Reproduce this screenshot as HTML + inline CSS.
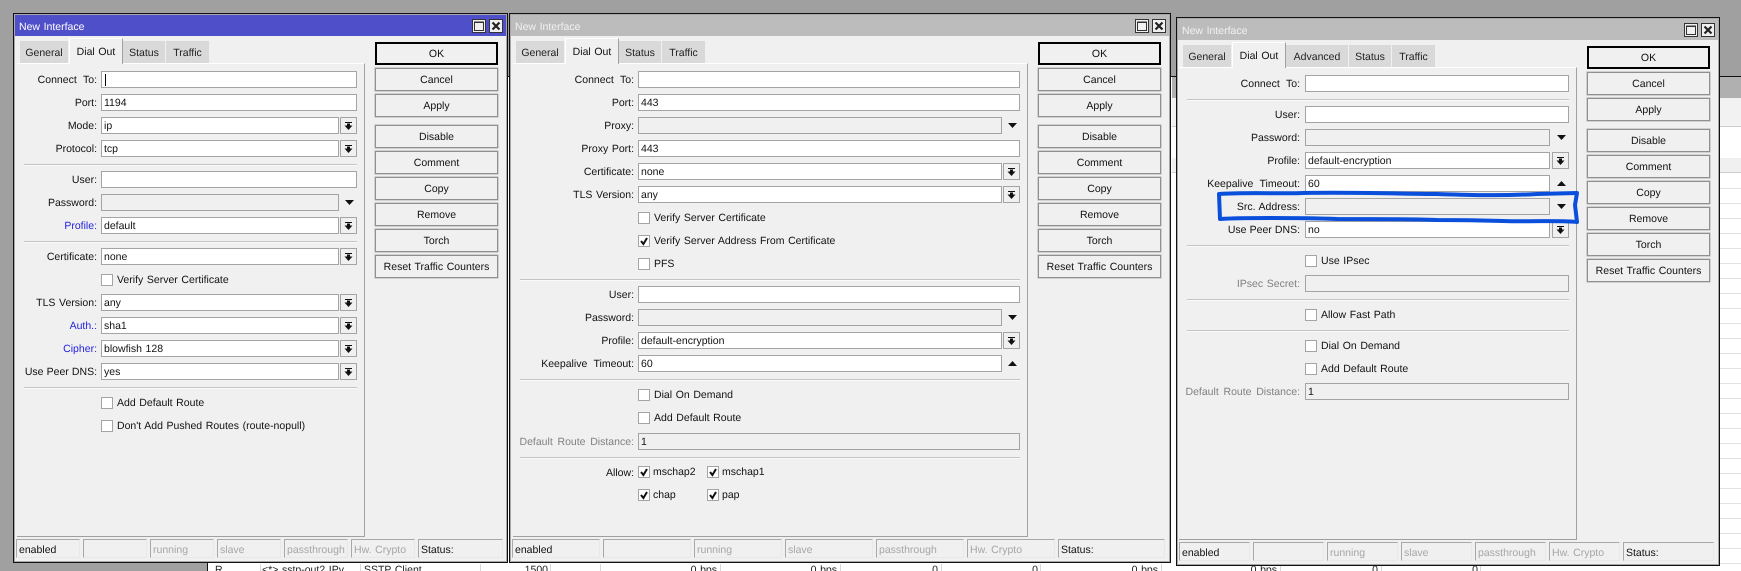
<!DOCTYPE html>
<html lang="en"><head><meta charset="utf-8"><title>New Interface</title>
<style>
html,body{margin:0;padding:0;width:1741px;height:571px;overflow:hidden;background:#a0a0a0}
#r{position:absolute;left:0;top:0;width:1741px;height:571px;overflow:hidden;background:#a0a0a0;font:10.5px/17px "Liberation Sans",sans-serif;word-spacing:.7px;text-rendering:geometricPrecision;color:#111}
#r *{position:absolute;box-sizing:border-box;white-space:nowrap}
.w{background:#f0f0f0;border:1px solid #111;box-shadow:inset 0 0 0 1px #a8a8a8}
.t{height:21px;background:#bcbcbc}
.a{background:#4f50c9}
.tt{height:21px;line-height:23px;color:#f2f2f2}
.att{color:#fff}
.wb{width:14px;height:14px;border:1px solid #333;background:#f0f0f0}
.wb svg{left:0;top:0;width:12px;height:12px}
.tb{height:22px;background:#d9d9d9;border-right:1px solid #f0f0f0;text-align:center;line-height:24px;color:#222}
.ta{height:26px;background:#f0f0f0;border-top:1px solid #fff;border-left:1px solid #fff;border-right:1px solid #a0a0a0;text-align:center;line-height:26px;z-index:2;color:#111}
.p{background:#f0f0f0;border-top:1px solid #fff;border-right:1px solid #a0a0a0;border-bottom:1px solid #a0a0a0}
.l{height:17px;line-height:19px;text-align:right}
.w3{word-spacing:3.5px}
.w2{word-spacing:1.8px}
.w0{word-spacing:.2px}
.g{color:#808080}
.bl{color:#1f1fe0}
.l1{left:0;width:97px}.l2{left:434px;width:200px}.l3{left:1100px;width:200px}
.f{height:17px;background:#fff;border:1px solid #a4a4a4;line-height:17px;padding-left:2px}
.n{background:#f0f0f0}
.f1{left:101px;width:256px}.s1{left:101px;width:238px}
.f2{left:638px;width:382px}.s2{left:638px;width:364px}
.f3{left:1305px;width:264px}.s3{left:1305px;width:245px}
.d{width:17px;height:17px}
.d1{left:340px}.d2{left:1003px}.d3{left:1552px}
.rr{width:9px;height:5px}
.r1{left:345px}.r2{left:1008px}.r3{left:1557px}
.c{width:12px;height:12px}
.c1{left:101px}.c2{left:638px}.c3{left:1305px}
.x{height:16px;line-height:17px}
.x1{left:117px}.x2{left:654px}.x3{left:1321px}
.h{height:1px;background:#c4c4c4;box-shadow:0 1px 0 #fafafa}
.b{width:123px;height:23px;border:1px solid #909090;background:#f0f0f0;box-shadow:0 0 0 .5px #b0b0b0;text-align:center;line-height:23px;color:#111}
.k{border:2px solid #000;line-height:21px;box-shadow:none}
.b1{left:375px}.b2{left:1038px}.b3{left:1587px}
.st{height:19px;border-top:1px solid #a8a8a8;border-left:1px solid #a8a8a8;border-right:1px solid #e8e8e8;border-bottom:1px solid #e8e8e8;line-height:20px;padding-left:2px;color:#a6a6a6;background:#f0f0f0}
.on{color:#111}
.cell{height:15px;line-height:15px;color:#222}
.lv{top:564px;width:1px;height:7px;background:#d8d8d8}
.ln{left:1720px;width:21px;height:1px;background:#e2e2e2}
</style></head><body><div id="r">
<svg width="0" height="0" style="left:0;top:0">
<defs>
<symbol id="sp" viewBox="0 0 17 17"><rect x=".5" y=".5" width="16" height="16" fill="#f0f0f0" stroke="#a4a4a4"/><path d="M5 5h7v1H5zM7 6.5h3V8.5H7zM4.5 8.5h8L8.5 13z" fill="#111"/></symbol>
<symbol id="dn" viewBox="0 0 9 5"><path d="M0 0h9L4.5 5z" fill="#111"/></symbol>
<symbol id="up" viewBox="0 0 9 5"><path d="M0 5h9L4.5 0z" fill="#111"/></symbol>
<symbol id="no" viewBox="0 0 12 12"><rect x=".5" y=".5" width="11" height="11" fill="#fff" stroke="#a4a4a4"/></symbol>
<symbol id="ck" viewBox="0 0 12 12"><rect x=".5" y=".5" width="11" height="11" fill="#fff" stroke="#a4a4a4"/><path d="M3 6l2.4 3L9 3" fill="none" stroke="#111" stroke-width="2"/></symbol>
<symbol id="mx" viewBox="0 0 12 12"><path d="M1.5 2h9v8.5h-9z" fill="#f0f0f0" stroke="#333"/><path d="M1.5 1.5h9V3h-9z" fill="#333"/></symbol>
<symbol id="cl" viewBox="0 0 12 12"><path d="M2.5 2.5l7 7M9.5 2.5l-7 7" stroke="#222" stroke-width="2.2"/></symbol>
</defs></svg>

<!-- background list -->
<div style="left:208px;top:76px;width:1533px;height:495px;background:#fff;border-top:1px solid #111"></div>
<div style="left:207px;top:76px;width:1px;height:495px;background:#111"></div>
<div style="left:1172px;top:77px;width:569px;height:21px;background:#b0b0b0"></div>
<div style="left:1172px;top:98px;width:569px;height:28px;background:#f2f2f2"></div>
<div style="left:1172px;top:126px;width:569px;height:1px;background:#ccc"></div>
<div style="left:1172px;top:158px;width:569px;height:15px;background:#f0f0f0;border-bottom:1px solid #ccc"></div>
<div class="ln" style="top:188px"></div><div class="ln" style="top:203px"></div><div class="ln" style="top:218px"></div><div class="ln" style="top:233px"></div><div class="ln" style="top:248px"></div><div class="ln" style="top:263px"></div><div class="ln" style="top:278px"></div><div class="ln" style="top:293px"></div><div class="ln" style="top:308px"></div><div class="ln" style="top:323px"></div><div class="ln" style="top:338px"></div><div class="ln" style="top:353px"></div><div class="ln" style="top:368px"></div><div class="ln" style="top:383px"></div><div class="ln" style="top:398px"></div><div class="ln" style="top:413px"></div><div class="ln" style="top:428px"></div><div class="ln" style="top:443px"></div><div class="ln" style="top:458px"></div><div class="ln" style="top:473px"></div><div class="ln" style="top:488px"></div><div class="ln" style="top:503px"></div><div class="ln" style="top:518px"></div><div class="ln" style="top:533px"></div><div class="ln" style="top:548px"></div><div class="ln" style="top:563px"></div>
<div class="lv" style="left:260px"></div><div class="lv" style="left:360px"></div><div class="lv" style="left:480px"></div><div class="lv" style="left:550px"></div><div class="lv" style="left:600px"></div><div class="lv" style="left:720px"></div><div class="lv" style="left:840px"></div><div class="lv" style="left:941px"></div><div class="lv" style="left:1040px"></div><div class="lv" style="left:1161px"></div><div class="lv" style="left:1280px"></div><div class="lv" style="left:1381px"></div><div class="lv" style="left:1480px"></div>
<div class="cell" style="left:215px;top:563px">R</div>
<div class="cell" style="left:262px;top:563px">&lt;*&gt; sstp-out2 IPv</div>
<div class="cell" style="left:364px;top:563px">SSTP Client</div>
<div class="cell" style="left:448px;top:563px;width:100px;text-align:right">1500</div>
<div class="cell" style="left:617px;top:563px;width:100px;text-align:right">0 bps</div>
<div class="cell" style="left:737px;top:563px;width:100px;text-align:right">0 bps</div>
<div class="cell" style="left:838px;top:563px;width:100px;text-align:right">0</div>
<div class="cell" style="left:938px;top:563px;width:100px;text-align:right">0</div>
<div class="cell" style="left:1058px;top:563px;width:100px;text-align:right">0 bps</div>
<div class="cell" style="left:1177px;top:563px;width:100px;text-align:right">0 bps</div>
<div class="cell" style="left:1278px;top:563px;width:100px;text-align:right">0</div>
<div class="cell" style="left:1378px;top:563px;width:100px;text-align:right">0</div>

<!-- WINDOW 1 -->
<div class="w" style="left:13px;top:13px;width:495px;height:550px"></div>
<div class="t a" style="left:15px;top:15px;width:491px"></div>
<div class="tt att" style="left:19px;top:16px">New Interface</div>
<div class="wb" style="left:472px;top:19px"><svg><use href="#mx"/></svg></div>
<div class="wb" style="left:489px;top:19px"><svg><use href="#cl"/></svg></div>
<div class="p" style="left:17px;top:63px;width:348px;height:474px"></div>
<div class="tb" style="left:20px;top:41px;width:49px">General</div>
<div class="ta" style="left:69px;top:38px;width:54px">Dial Out</div>
<div class="tb" style="left:123px;top:41px;width:43px">Status</div>
<div class="tb" style="left:166px;top:41px;width:44px">Traffic</div>

<div class="l l1 w3" style="top:71px">Connect To:</div><div class="f f1" style="top:71px"><div style="left:3px;top:2px;width:1px;height:12px;background:#000"></div></div>
<div class="l l1" style="top:94px">Port:</div><div class="f f1" style="top:94px">1194</div>
<div class="l l1" style="top:117px">Mode:</div><div class="f s1" style="top:117px">ip</div><svg class="d d1" style="top:117px"><use href="#sp"/></svg>
<div class="l l1" style="top:140px">Protocol:</div><div class="f s1" style="top:140px">tcp</div><svg class="d d1" style="top:140px"><use href="#sp"/></svg>
<div class="h" style="left:24px;top:164px;width:333px"></div>
<div class="l l1" style="top:171px">User:</div><div class="f f1" style="top:171px"></div>
<div class="l l1" style="top:194px">Password:</div><div class="f s1 n" style="top:194px"></div><svg class="rr r1" style="top:200px"><use href="#dn"/></svg>
<div class="l l1 bl" style="top:217px">Profile:</div><div class="f s1" style="top:217px">default</div><svg class="d d1" style="top:217px"><use href="#sp"/></svg>
<div class="h" style="left:24px;top:241px;width:333px"></div>
<div class="l l1" style="top:248px">Certificate:</div><div class="f s1" style="top:248px">none</div><svg class="d d1" style="top:248px"><use href="#sp"/></svg>
<svg class="c c1" style="top:274px"><use href="#no"/></svg><div class="x x1" style="top:272px">Verify Server Certificate</div>
<div class="l l1" style="top:294px">TLS Version:</div><div class="f s1" style="top:294px">any</div><svg class="d d1" style="top:294px"><use href="#sp"/></svg>
<div class="l l1 bl" style="top:317px">Auth.:</div><div class="f s1" style="top:317px">sha1</div><svg class="d d1" style="top:317px"><use href="#sp"/></svg>
<div class="l l1 bl" style="top:340px">Cipher:</div><div class="f s1" style="top:340px">blowfish 128</div><svg class="d d1" style="top:340px"><use href="#sp"/></svg>
<div class="l l1 w0" style="top:363px">Use Peer DNS:</div><div class="f s1" style="top:363px">yes</div><svg class="d d1" style="top:363px"><use href="#sp"/></svg>
<div class="h" style="left:24px;top:387px;width:333px"></div>
<svg class="c c1" style="top:397px"><use href="#no"/></svg><div class="x x1" style="top:395px">Add Default Route</div>
<svg class="c c1" style="top:420px"><use href="#no"/></svg><div class="x x1" style="top:418px">Don't Add Pushed Routes (route-nopull)</div>

<div class="b b1 k" style="top:42px">OK</div>
<div class="b b1" style="top:68px">Cancel</div>
<div class="b b1" style="top:94px">Apply</div>
<div class="b b1" style="top:125px">Disable</div>
<div class="b b1" style="top:151px">Comment</div>
<div class="b b1" style="top:177px">Copy</div>
<div class="b b1" style="top:203px">Remove</div>
<div class="b b1" style="top:229px">Torch</div>
<div class="b b1" style="top:255px">Reset Traffic Counters</div>

<div class="st on" style="left:16px;top:539px;width:64px">enabled</div>
<div class="st" style="left:83px;top:539px;width:64px"></div>
<div class="st" style="left:150px;top:539px;width:64px">running</div>
<div class="st" style="left:217px;top:539px;width:64px">slave</div>
<div class="st" style="left:284px;top:539px;width:64px">passthrough</div>
<div class="st" style="left:351px;top:539px;width:64px">Hw. Crypto</div>
<div class="st on" style="left:418px;top:539px;width:85px">Status:</div>

<!-- WINDOW 2 -->
<div class="w" style="left:509px;top:13px;width:662px;height:550px"></div>
<div class="t" style="left:511px;top:15px;width:658px"></div>
<div class="tt" style="left:515px;top:16px">New Interface</div>
<div class="wb" style="left:1135px;top:19px"><svg><use href="#mx"/></svg></div>
<div class="wb" style="left:1152px;top:19px"><svg><use href="#cl"/></svg></div>
<div class="p" style="left:513px;top:63px;width:515px;height:474px"></div>
<div class="tb" style="left:516px;top:41px;width:49px">General</div>
<div class="ta" style="left:565px;top:38px;width:54px">Dial Out</div>
<div class="tb" style="left:619px;top:41px;width:43px">Status</div>
<div class="tb" style="left:662px;top:41px;width:44px">Traffic</div>

<div class="l l2 w3" style="top:71px">Connect To:</div><div class="f f2" style="top:71px"></div>
<div class="l l2" style="top:94px">Port:</div><div class="f f2" style="top:94px">443</div>
<div class="l l2" style="top:117px">Proxy:</div><div class="f s2 n" style="top:117px"></div><svg class="rr r2" style="top:123px"><use href="#dn"/></svg>
<div class="l l2" style="top:140px">Proxy Port:</div><div class="f f2" style="top:140px">443</div>
<div class="l l2" style="top:163px">Certificate:</div><div class="f s2" style="top:163px">none</div><svg class="d d2" style="top:163px"><use href="#sp"/></svg>
<div class="l l2" style="top:186px">TLS Version:</div><div class="f s2" style="top:186px">any</div><svg class="d d2" style="top:186px"><use href="#sp"/></svg>
<svg class="c c2" style="top:212px"><use href="#no"/></svg><div class="x x2" style="top:210px">Verify Server Certificate</div>
<svg class="c c2" style="top:235px"><use href="#ck"/></svg><div class="x x2" style="top:233px">Verify Server Address From Certificate</div>
<svg class="c c2" style="top:258px"><use href="#no"/></svg><div class="x x2" style="top:256px">PFS</div>
<div class="h" style="left:520px;top:279px;width:500px"></div>
<div class="l l2" style="top:286px">User:</div><div class="f f2" style="top:286px"></div>
<div class="l l2" style="top:309px">Password:</div><div class="f s2 n" style="top:309px"></div><svg class="rr r2" style="top:315px"><use href="#dn"/></svg>
<div class="l l2" style="top:332px">Profile:</div><div class="f s2" style="top:332px">default-encryption</div><svg class="d d2" style="top:332px"><use href="#sp"/></svg>
<div class="l l2 w3" style="top:355px">Keepalive Timeout:</div><div class="f s2" style="top:355px">60</div><svg class="rr r2" style="top:361px"><use href="#up"/></svg>
<div class="h" style="left:520px;top:379px;width:500px"></div>
<svg class="c c2" style="top:389px"><use href="#no"/></svg><div class="x x2" style="top:387px">Dial On Demand</div>
<svg class="c c2" style="top:412px"><use href="#no"/></svg><div class="x x2" style="top:410px">Add Default Route</div>
<div class="l l2 g w2" style="top:433px">Default Route Distance:</div><div class="f f2 n" style="top:433px">1</div>
<div class="h" style="left:520px;top:457px;width:500px"></div>
<div class="l l2" style="top:464px">Allow:</div>
<svg class="c c2" style="top:466px"><use href="#ck"/></svg><div class="x" style="left:653px;top:464px">mschap2</div>
<svg class="c" style="left:707px;top:466px"><use href="#ck"/></svg><div class="x" style="left:722px;top:464px">mschap1</div>
<svg class="c c2" style="top:489px"><use href="#ck"/></svg><div class="x" style="left:653px;top:487px">chap</div>
<svg class="c" style="left:707px;top:489px"><use href="#ck"/></svg><div class="x" style="left:722px;top:487px">pap</div>

<div class="b b2 k" style="top:42px">OK</div>
<div class="b b2" style="top:68px">Cancel</div>
<div class="b b2" style="top:94px">Apply</div>
<div class="b b2" style="top:125px">Disable</div>
<div class="b b2" style="top:151px">Comment</div>
<div class="b b2" style="top:177px">Copy</div>
<div class="b b2" style="top:203px">Remove</div>
<div class="b b2" style="top:229px">Torch</div>
<div class="b b2" style="top:255px">Reset Traffic Counters</div>

<div class="st on" style="left:512px;top:539px;width:88px">enabled</div>
<div class="st" style="left:603px;top:539px;width:88px"></div>
<div class="st" style="left:694px;top:539px;width:88px">running</div>
<div class="st" style="left:785px;top:539px;width:88px">slave</div>
<div class="st" style="left:876px;top:539px;width:88px">passthrough</div>
<div class="st" style="left:967px;top:539px;width:88px">Hw. Crypto</div>
<div class="st on" style="left:1058px;top:539px;width:107px">Status:</div>

<!-- WINDOW 3 -->
<div class="w" style="left:1176px;top:17px;width:544px;height:549px"></div>
<div class="t" style="left:1178px;top:19px;width:540px"></div>
<div class="tt" style="left:1182px;top:20px">New Interface</div>
<div class="wb" style="left:1684px;top:23px"><svg><use href="#mx"/></svg></div>
<div class="wb" style="left:1701px;top:23px"><svg><use href="#cl"/></svg></div>
<div class="p" style="left:1179px;top:67px;width:398px;height:473px"></div>
<div class="tb" style="left:1183px;top:45px;width:49px">General</div>
<div class="ta" style="left:1232px;top:42px;width:54px">Dial Out</div>
<div class="tb" style="left:1286px;top:45px;width:63px">Advanced</div>
<div class="tb" style="left:1349px;top:45px;width:43px">Status</div>
<div class="tb" style="left:1392px;top:45px;width:44px">Traffic</div>

<div class="l l3 w3" style="top:75px">Connect To:</div><div class="f f3" style="top:75px"></div>
<div class="h" style="left:1187px;top:99px;width:382px"></div>
<div class="l l3" style="top:106px">User:</div><div class="f f3" style="top:106px"></div>
<div class="l l3" style="top:129px">Password:</div><div class="f s3 n" style="top:129px"></div><svg class="rr r3" style="top:135px"><use href="#dn"/></svg>
<div class="l l3" style="top:152px">Profile:</div><div class="f s3" style="top:152px">default-encryption</div><svg class="d d3" style="top:152px"><use href="#sp"/></svg>
<div class="l l3 w3" style="top:175px">Keepalive Timeout:</div><div class="f s3" style="top:175px">60</div><svg class="rr r3" style="top:181px"><use href="#up"/></svg>
<div class="l l3" style="top:198px">Src. Address:</div><div class="f s3 n" style="top:198px"></div><svg class="rr r3" style="top:204px"><use href="#dn"/></svg>
<div class="l l3 w0" style="top:221px">Use Peer DNS:</div><div class="f s3" style="top:221px">no</div><svg class="d d3" style="top:221px"><use href="#sp"/></svg>
<div class="h" style="left:1187px;top:245px;width:382px"></div>
<svg class="c c3" style="top:255px"><use href="#no"/></svg><div class="x x3" style="top:253px">Use IPsec</div>
<div class="l l3 g" style="top:275px">IPsec Secret:</div><div class="f f3 n" style="top:275px"></div>
<div class="h" style="left:1187px;top:299px;width:382px"></div>
<svg class="c c3" style="top:309px"><use href="#no"/></svg><div class="x x3" style="top:307px">Allow Fast Path</div>
<div class="h" style="left:1187px;top:330px;width:382px"></div>
<svg class="c c3" style="top:340px"><use href="#no"/></svg><div class="x x3" style="top:338px">Dial On Demand</div>
<svg class="c c3" style="top:363px"><use href="#no"/></svg><div class="x x3" style="top:361px">Add Default Route</div>
<div class="l l3 g w2" style="top:383px">Default Route Distance:</div><div class="f f3 n" style="top:383px">1</div>

<div class="b b3 k" style="top:46px">OK</div>
<div class="b b3" style="top:72px">Cancel</div>
<div class="b b3" style="top:98px">Apply</div>
<div class="b b3" style="top:129px">Disable</div>
<div class="b b3" style="top:155px">Comment</div>
<div class="b b3" style="top:181px">Copy</div>
<div class="b b3" style="top:207px">Remove</div>
<div class="b b3" style="top:233px">Torch</div>
<div class="b b3" style="top:259px">Reset Traffic Counters</div>

<div class="st on" style="left:1179px;top:542px;width:71px">enabled</div>
<div class="st" style="left:1253px;top:542px;width:71px"></div>
<div class="st" style="left:1327px;top:542px;width:71px">running</div>
<div class="st" style="left:1401px;top:542px;width:71px">slave</div>
<div class="st" style="left:1475px;top:542px;width:71px">passthrough</div>
<div class="st" style="left:1549px;top:542px;width:71px">Hw. Crypto</div>
<div class="st on" style="left:1623px;top:542px;width:91px">Status:</div>

<!-- highlight -->
<svg width="1741" height="571" style="left:0;top:0;z-index:5;pointer-events:none"><path d="M1220 219L1219 194C1250 192 1280 194 1303 193C1360 192 1400 194 1437 194C1470 195 1500 196 1537 194L1577 193L1575 205L1577 222C1560 220 1530 222 1503 221C1470 220 1450 220 1437 220C1400 219 1370 219 1337 219C1310 218 1290 218 1270 218C1250 218 1235 218 1220 219Z" fill="none" stroke="#0a4fdc" stroke-width="4" stroke-linejoin="round"/></svg>
</div></body></html>
